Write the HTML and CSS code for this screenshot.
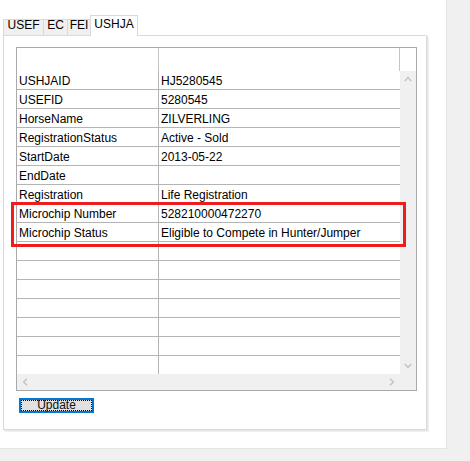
FILE: index.html
```html
<!DOCTYPE html>
<html>
<head>
<meta charset="utf-8">
<link rel="stylesheet" href="styles.css">
</head>
<body>
<div class="outer">
  <div class="tabs">
    <div class="tab w-usef">USEF</div>
    <div class="tab w-ec">EC</div>
    <div class="tab w-fei">FEI</div>
    <div class="tab active w-ushja">USHJA</div>
  </div>
  <div class="panel">
    <div class="grid">
      <div class="header">
        <div class="hcell c1"></div>
        <div class="hcell c2"></div>
      </div>
      <div class="main">
        <div class="rows">
          <div class="row"><div class="cell c1">USHJAID</div><div class="cell c2">HJ5280545</div></div>
          <div class="row"><div class="cell c1">USEFID</div><div class="cell c2">5280545</div></div>
          <div class="row"><div class="cell c1">HorseName</div><div class="cell c2">ZILVERLING</div></div>
          <div class="row"><div class="cell c1">RegistrationStatus</div><div class="cell c2">Active - Sold</div></div>
          <div class="row"><div class="cell c1">StartDate</div><div class="cell c2">2013-05-22</div></div>
          <div class="row"><div class="cell c1">EndDate</div><div class="cell c2"></div></div>
          <div class="row"><div class="cell c1">Registration</div><div class="cell c2">Life Registration</div></div>
          <div class="row"><div class="cell c1">Microchip Number</div><div class="cell c2">528210000472270</div></div>
          <div class="row"><div class="cell c1">Microchip Status</div><div class="cell c2">Eligible to Compete in Hunter/Jumper</div></div>
          <div class="row"><div class="cell c1"></div><div class="cell c2"></div></div>
          <div class="row"><div class="cell c1"></div><div class="cell c2"></div></div>
          <div class="row"><div class="cell c1"></div><div class="cell c2"></div></div>
          <div class="row"><div class="cell c1"></div><div class="cell c2"></div></div>
          <div class="row"><div class="cell c1"></div><div class="cell c2"></div></div>
          <div class="row"><div class="cell c1"></div><div class="cell c2"></div></div>
          <div class="row"><div class="cell c1"></div><div class="cell c2"></div></div>
        </div>
        <div class="vscroll">
          <div class="sbtn"><svg width="8" height="6" viewBox="0 0 8 6"><polyline points="0.8,5 4,1.6 7.2,5" fill="none" stroke="#c2c2c2" stroke-width="1.4"/></svg></div>
          <div class="sbtn"><svg width="8" height="6" viewBox="0 0 8 6"><polyline points="0.8,1 4,4.4 7.2,1" fill="none" stroke="#c2c2c2" stroke-width="1.4"/></svg></div>
        </div>
      </div>
      <div class="hscroll">
        <div class="htrack">
          <div class="sbtn"><svg width="6" height="8" viewBox="0 0 6 8"><polyline points="5,0.8 1.6,4 5,7.2" fill="none" stroke="#c2c2c2" stroke-width="1.4"/></svg></div>
          <div class="sbtn"><svg width="6" height="8" viewBox="0 0 6 8"><polyline points="1,0.8 4.4,4 1,7.2" fill="none" stroke="#c2c2c2" stroke-width="1.4"/></svg></div>
        </div>
        <div class="corner"></div>
      </div>
    </div>
    <div class="button"><span class="focus">Update</span></div>
  </div>
  <div class="highlight"></div>
</div>
</body>
</html>
```
FILE: styles.css
```css
html, body {
  margin: 0;
  padding: 0;
}
body {
  background: #f0f0f0;
  font-family: "Liberation Sans", Arial, sans-serif;
  font-size: 12px;
  color: #000;
}
.outer {
  position: relative;
  box-sizing: border-box;
  width: 447px;
  height: 449px;
  background: #fff;
  border-right: 1px solid #e4e4e4;
  border-bottom: 1px solid #e4e4e4;
  padding: 15px 0 0 3px;
}
.tabs {
  display: flex;
  align-items: flex-end;
  height: 20px;
  position: relative;
  z-index: 2;
}
.tab {
  box-sizing: border-box;
  height: 16px;
  border: 1px solid #d9d9d9;
  border-bottom: none;
  background: #f0f0f0;
  text-align: center;
  line-height: 10px;
  margin-left: -1px;
}
.tab:first-child {
  margin-left: 0;
}
.w-usef { width: 41px; }
.w-ec { width: 25px; }
.w-fei { width: 24px; }
.w-ushja { width: 48px; }
.tab.active {
  height: 21px;
  margin-bottom: -1px;
  background: #fff;
  line-height: 16px;
}
.panel {
  box-sizing: border-box;
  width: 424px;
  height: 395px;
  border: 1px solid #dadada;
  box-shadow: 1px 1px 0 #e6e6e6, 2px 2px 0 #f0f0f0;
  padding: 11px 0 0 12px;
  background: #fff;
}
.grid {
  box-sizing: border-box;
  width: 401px;
  height: 344px;
  border: 1px solid #a9a9a9;
  display: flex;
  flex-direction: column;
}
.header {
  display: flex;
  height: 23px;
  flex: none;
}
.hcell {
  box-sizing: border-box;
  border-right: 1px solid #c4c4c4;
}
.c1 {
  width: 142px;
  flex: none;
}
.c2 {
  width: 241px;
  flex: none;
}
.main {
  display: flex;
  height: 303px;
  flex: none;
}
.rows {
  width: 383px;
  height: 303px;
  overflow: hidden;
}
.row {
  display: flex;
  box-sizing: border-box;
  height: 19px;
  border-bottom: 1px solid #b4b4b4;
}
.cell {
  box-sizing: border-box;
  padding-left: 2px;
  line-height: 20px;
  white-space: nowrap;
}
.cell.c1 {
  border-right: 1px solid #b4b4b4;
}
.vscroll {
  width: 16px;
  background: #f0f0f0;
  display: flex;
  flex-direction: column;
  justify-content: space-between;
}
.sbtn {
  width: 16px;
  height: 16px;
  display: flex;
  align-items: center;
  justify-content: center;
}
.sbtn svg {
  display: block;
}
.hscroll {
  display: flex;
  height: 16px;
  flex: none;
}
.htrack {
  width: 383px;
  background: #f0f0f0;
  display: flex;
  justify-content: space-between;
}
.corner {
  width: 16px;
  background: #f0f0f0;
}
.button {
  box-sizing: border-box;
  width: 75px;
  height: 15px;
  margin: 7px 0 0 3px;
  border: 2px solid #0078d7;
  background: #e1e1e1;
  display: flex;
}
.focus {
  flex: 1;
  box-sizing: border-box;
  border: 1px dotted #000;
  text-align: center;
  line-height: 9px;
  color: #111;
}
.highlight {
  position: absolute;
  left: 11px;
  top: 202px;
  width: 395px;
  height: 45px;
  box-sizing: border-box;
  border: 3px solid #ee1c1c;
}
```
